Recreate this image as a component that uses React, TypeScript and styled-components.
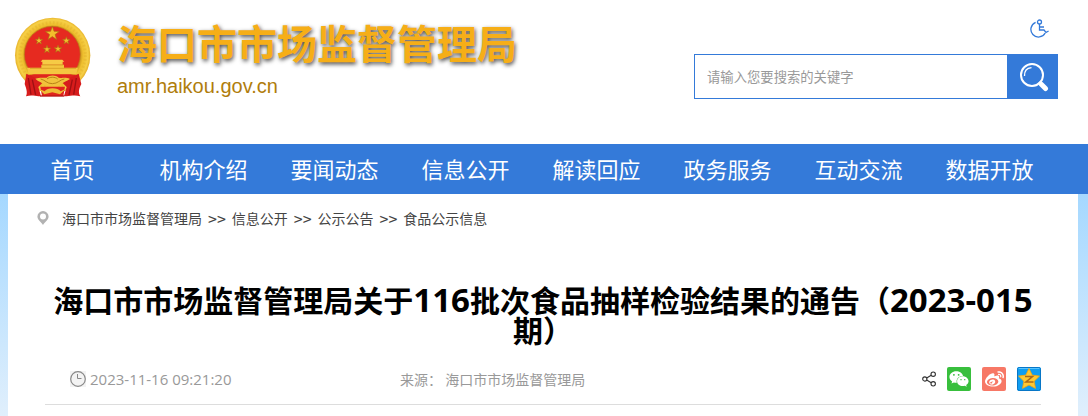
import React from "react";
import styled, { createGlobalStyle } from "styled-components";
import { FaWeibo, FaWeixin } from "react-icons/fa";

const blue = "#347ad9";
const cjk = `"Noto Sans CJK SC", sans-serif`;

const GlobalStyle = createGlobalStyle`
  * { box-sizing: border-box; }
  body { margin: 0; background: #fff; font-family: ${cjk}; }
  a { color: inherit; text-decoration: none; }
`;

const Header = styled.header`
  display: flex;
  justify-content: space-between;
  align-items: flex-start;
  padding: 15px 30px 45px 13px;
`;

const Brand = styled.a`
  display: flex;
  gap: 24px;
`;

const BrandText = styled.div`
  display: flex;
  flex-direction: column;
  gap: 5px;
`;

const SiteName = styled.span`
  font-size: 40px;
  line-height: 54px;
  font-weight: 700;
  color: #f6ae17;
  white-space: nowrap;
  text-shadow: 1px 2px 4px rgba(0, 0, 0, 0.7);
`;

const SiteUrl = styled.span`
  font: 20px/24px "Liberation Sans", sans-serif;
  color: #b07d0c;
`;

const Tools = styled.div`
  display: flex;
  flex-direction: column;
  align-items: flex-end;
  gap: 16px;
  padding-top: 4px;
`;

const AccessLink = styled.a`
  display: flex;
  margin-right: 9px;
`;

const SearchForm = styled.form`
  display: flex;
  width: 364px;
  height: 45px;
`;

const SearchInput = styled.input`
  flex: 1;
  min-width: 0;
  padding: 0 12px;
  border: 1px solid ${blue};
  border-right: 0;
  border-radius: 0;
  outline: 0;
  font-family: ${cjk};
  &::placeholder { color: #999; opacity: 1; }
`;

const SearchButton = styled.button`
  display: flex;
  align-items: center;
  justify-content: center;
  width: 51px;
  padding: 0 0 0 3px;
  border: 0;
  background: ${blue};
`;

const Nav = styled.nav`
  display: grid;
  grid-template-columns: repeat(8, 1fr);
  padding: 0 33px 2px 7px;
  background: ${blue};
`;

const NavLink = styled.a`
  font-size: 22px;
  line-height: 48px;
  text-align: center;
  color: #fff;
  white-space: nowrap;
`;

const Backdrop = styled.div`
  padding: 0 10px 0 8px;
  background: linear-gradient(#a5d8ff, #e0effc 222px);
`;

const Sheet = styled.main`
  padding: 0 37px 24px;
  background: #fff;
`;

const Breadcrumb = styled.nav`
  display: flex;
  align-items: center;
  gap: 6px;
  margin-left: -8px;
  font-size: 14px;
  line-height: 48px;
  color: #444;
  svg { margin-right: 7px; }
`;

const Separator = styled.span`
  font-size: 16px;
`;

const Title = styled.h1`
  margin: 42px 0 0;
  font-size: 30px;
  line-height: 30px;
  font-weight: 700;
  text-align: center;
  color: #000;
`;

const Digits = styled.span`
  font-family: "Open Sans", sans-serif;
  font-size: 33px;
  line-height: 1px;
`;

const Meta = styled.div`
  display: grid;
  grid-template-columns: 330px 1fr auto;
  align-items: center;
  margin-top: 23px;
  padding: 0 0 13px 25px;
  border-bottom: 1px solid #ddd;
  font-size: 14px;
  line-height: 24px;
  color: #999;
`;

const Stamp = styled.time`
  display: flex;
  align-items: center;
  gap: 4px;
  font-family: "Open Sans", sans-serif;
  font-size: 15px;
`;

const Share = styled.div`
  display: flex;
  align-items: center;
  gap: 11px;
`;

const ShareButton = styled.button<{ $color: string }>`
  display: flex;
  align-items: center;
  justify-content: center;
  width: 24px;
  height: 24px;
  padding: 0;
  border: 0;
  border-radius: 2px;
  background: ${(p) => p.$color};
  color: #fff;
`;

const starPoints = (cx: number, cy: number, r: number, inner = 0.4) =>
  Array.from({ length: 10 }, (_, i) => {
    const a = (Math.PI * i) / 5 - Math.PI / 2;
    const d = i % 2 ? r * inner : r;
    return `${(cx + d * Math.cos(a)).toFixed(1)},${(cy + d * Math.sin(a)).toFixed(1)}`;
  }).join(" ");

const Emblem = () => (
  <svg width="80" height="84" viewBox="39 45 240 252" aria-hidden="true">
    <defs>
      <radialGradient id="ring" gradientUnits="userSpaceOnUse" cx="158" cy="165" r="114">
        <stop offset="0.72" stopColor="#c9921c" />
        <stop offset="0.8" stopColor="#efc02f" />
        <stop offset="0.93" stopColor="#f6cf46" />
        <stop offset="1" stopColor="#e3ac25" />
      </radialGradient>
    </defs>
    <circle cx="158" cy="166" r="113" fill="url(#ring)" />
    <circle cx="158" cy="166" r="98" fill="none" stroke="#dba428" strokeWidth="9" strokeDasharray="5 6" opacity="0.3" />
    <circle cx="157" cy="163" r="84" fill="#e62a20" stroke="#b98216" strokeWidth="2" />
    {[[157, 101, 22], [117, 122, 12], [199, 122, 12], [141, 148, 12], [174, 147, 12]].map(([x, y, r]) => (
      <polygon key={x} points={starPoints(x, y, r)} fill="#f3bd2c" stroke="#ad6a13" strokeWidth="2" />
    ))}
    <path d="M127 179h60l6 6h-5v9h-61v-9h-5z" fill="#f6cb45" />
    <path d="M124 194h68v9h42l-5 20H86l-5-20h43z" fill="#f4c640" />
    <path d="M126 195h64M90 205h138" stroke="#cf951d" strokeWidth="2" />
    <path d="M86 224h143l-12 14H98z" fill="#df251d" />
    <path d="M79 221l26 12 30 8-20 20 8 27c-15 3-24-5-45 1 6-12 0-25-4-37zM236 221l-26 12-30 8 20 20-8 27c15 3 27-5 49 1-8-12-3-25 3-37z" fill="#d71c1c" />
    <path d="M85 234l8 50M97 239l10 46M229 234l-8 50M217 239l-10 46" stroke="#9e1013" strokeWidth="4" fill="none" />
    <path d="M106 236c14-5 25-2 34-3 8-9 28-9 36 0 11 2 23-2 34 4-10 7-21 10-30 18-14 10-31 10-45 0-9-8-20-10-29-19z" fill="#f1c23c" />
    <path d="M122 237c14 3 18 14 35 14s22-12 36-14M141 237c8-7 24-7 32 0" stroke="#b98217" strokeWidth="3" fill="none" />
    <path d="M121 260h74l-5 28h-64z" fill="#df251d" />
    <path d="M134 274c7-12 40-12 48 0l16-8-18 17-23-6-24 6-17-17z" fill="#eebb36" />
    <path d="M120 288h73" stroke="#b91717" strokeWidth="4" />
  </svg>
);

const AccessIcon = () => (
  <svg width="19" height="19" viewBox="0 0 19 19" fill="none" stroke={blue} strokeWidth="1.3" aria-hidden="true">
    <circle cx="9.5" cy="3" r="2" />
    <path d="M5.600 3.400a7.600 7.600 0 1 0 9.600 10.600M9.500 5v6h4.500l2 2.500 2.600-1.500M9.500 8h4.500" />
  </svg>
);

const SearchIcon = () => (
  <svg width="30" height="30" viewBox="0 0 30 30" fill="none" stroke="#fff" aria-hidden="true">
    <circle cx="13" cy="13" r="11" strokeWidth="2" />
    <path d="M5.5 14c-.2-5 2.5-8 7-8.4" strokeWidth="1.3" />
    <path d="M20 20l2 2" strokeWidth="3" />
    <path d="M22.5 22.5l4 4" strokeWidth="5" strokeLinecap="round" />
  </svg>
);

const PinIcon = () => (
  <svg width="12" height="14" viewBox="0 0 12 14" aria-hidden="true">
    <path fillRule="evenodd" fill="#b2b2b2" d="M6 0a5.6 5.6 0 0 1 5.6 5.6C11.6 9 7.5 11.5 6 14 4.5 11.5.4 9 .4 5.6A5.6 5.6 0 0 1 6 0zm0 2.6a3 3 0 1 0 0 6 3 3 0 0 0 0-6z" />
  </svg>
);

const ClockIcon = () => (
  <svg width="16" height="16" viewBox="0 0 16 16" fill="none" stroke="#888" aria-hidden="true">
    <path d="M0 0h16v16H0z" fill="#f3f3f3" stroke="none" />
    <circle cx="8" cy="8" r="7.3" strokeWidth="1.2" />
    <path d="M7.5 3v4.500h4" />
  </svg>
);

const ShareIcon = () => (
  <svg width="14" height="16" viewBox="0 0 14 16" fill="none" stroke="#333" strokeWidth="1.1" aria-hidden="true">
    <circle cx="2.8" cy="8" r="2.1" />
    <circle cx="11.2" cy="3.2" r="2.2" />
    <circle cx="11.2" cy="12.8" r="2.2" />
    <path d="M4.7 7l4.5-2.7M4.7 9l4.5 2.7" />
  </svg>
);

const QzoneIcon = () => (
  <svg width="24" height="24" viewBox="0 0 24 24" aria-hidden="true">
    <rect x="0.5" y="0.5" width="23" height="23" rx="2" fill="#109df0" stroke="#0876c6" />
    <path d="M1.5 1.5h21" stroke="#58c4ff" />
    <polygon points={starPoints(12, 12.5, 11, 0.5)} fill="#ffc832" stroke="#f5a70c" strokeWidth="0.8" strokeLinejoin="round" />
    <path d="M8 9.5h7.500L9 15h7.500" fill="none" stroke="#a9691b" strokeWidth="1.6" />
  </svg>
);

const navItems = ["首页", "机构介绍", "要闻动态", "信息公开", "解读回应", "政务服务", "互动交流", "数据开放"];
const trail = ["海口市市场监督管理局", "信息公开", "公示公告", "食品公示信息"];

export default function App() {
  return (
    <>
      <GlobalStyle />
      <Header>
        <Brand href="#">
          <Emblem />
          <BrandText>
            <SiteName>海口市市场监督管理局</SiteName>
            <SiteUrl>amr.haikou.gov.cn</SiteUrl>
          </BrandText>
        </Brand>
        <Tools>
          <AccessLink href="#" aria-label="无障碍"><AccessIcon /></AccessLink>
          <SearchForm onSubmit={(e) => e.preventDefault()}>
            <SearchInput type="text" aria-label="搜索" placeholder="请输入您要搜索的关键字" />
            <SearchButton type="submit" aria-label="搜索"><SearchIcon /></SearchButton>
          </SearchForm>
        </Tools>
      </Header>
      <Nav>
        {navItems.map((item) => <NavLink href="#" key={item}>{item}</NavLink>)}
      </Nav>
      <Backdrop>
        <Sheet>
          <Breadcrumb>
            <PinIcon />
            {trail.map((item, i) => (
              <React.Fragment key={item}>
                {i > 0 && <Separator>&gt;&gt;</Separator>}
                <a href="#">{item}</a>
              </React.Fragment>
            ))}
          </Breadcrumb>
          <Title>
            海口市市场监督管理局关于<Digits>116</Digits>批次食品抽样检验结果的通告（<Digits>2023-015</Digits>期）
          </Title>
          <Meta>
            <Stamp><ClockIcon />2023-11-16 09:21:20</Stamp>
            <span>来源： 海口市市场监督管理局</span>
            <Share>
              <ShareIcon />
              <ShareButton type="button" aria-label="微信" $color="#38bf3d"><FaWeixin size={20} /></ShareButton>
              <ShareButton type="button" aria-label="微博" $color="#f77866"><FaWeibo size={19} /></ShareButton>
              <ShareButton type="button" aria-label="QQ空间" $color="#109df0"><QzoneIcon /></ShareButton>
            </Share>
          </Meta>
        </Sheet>
      </Backdrop>
    </>
  );
}
